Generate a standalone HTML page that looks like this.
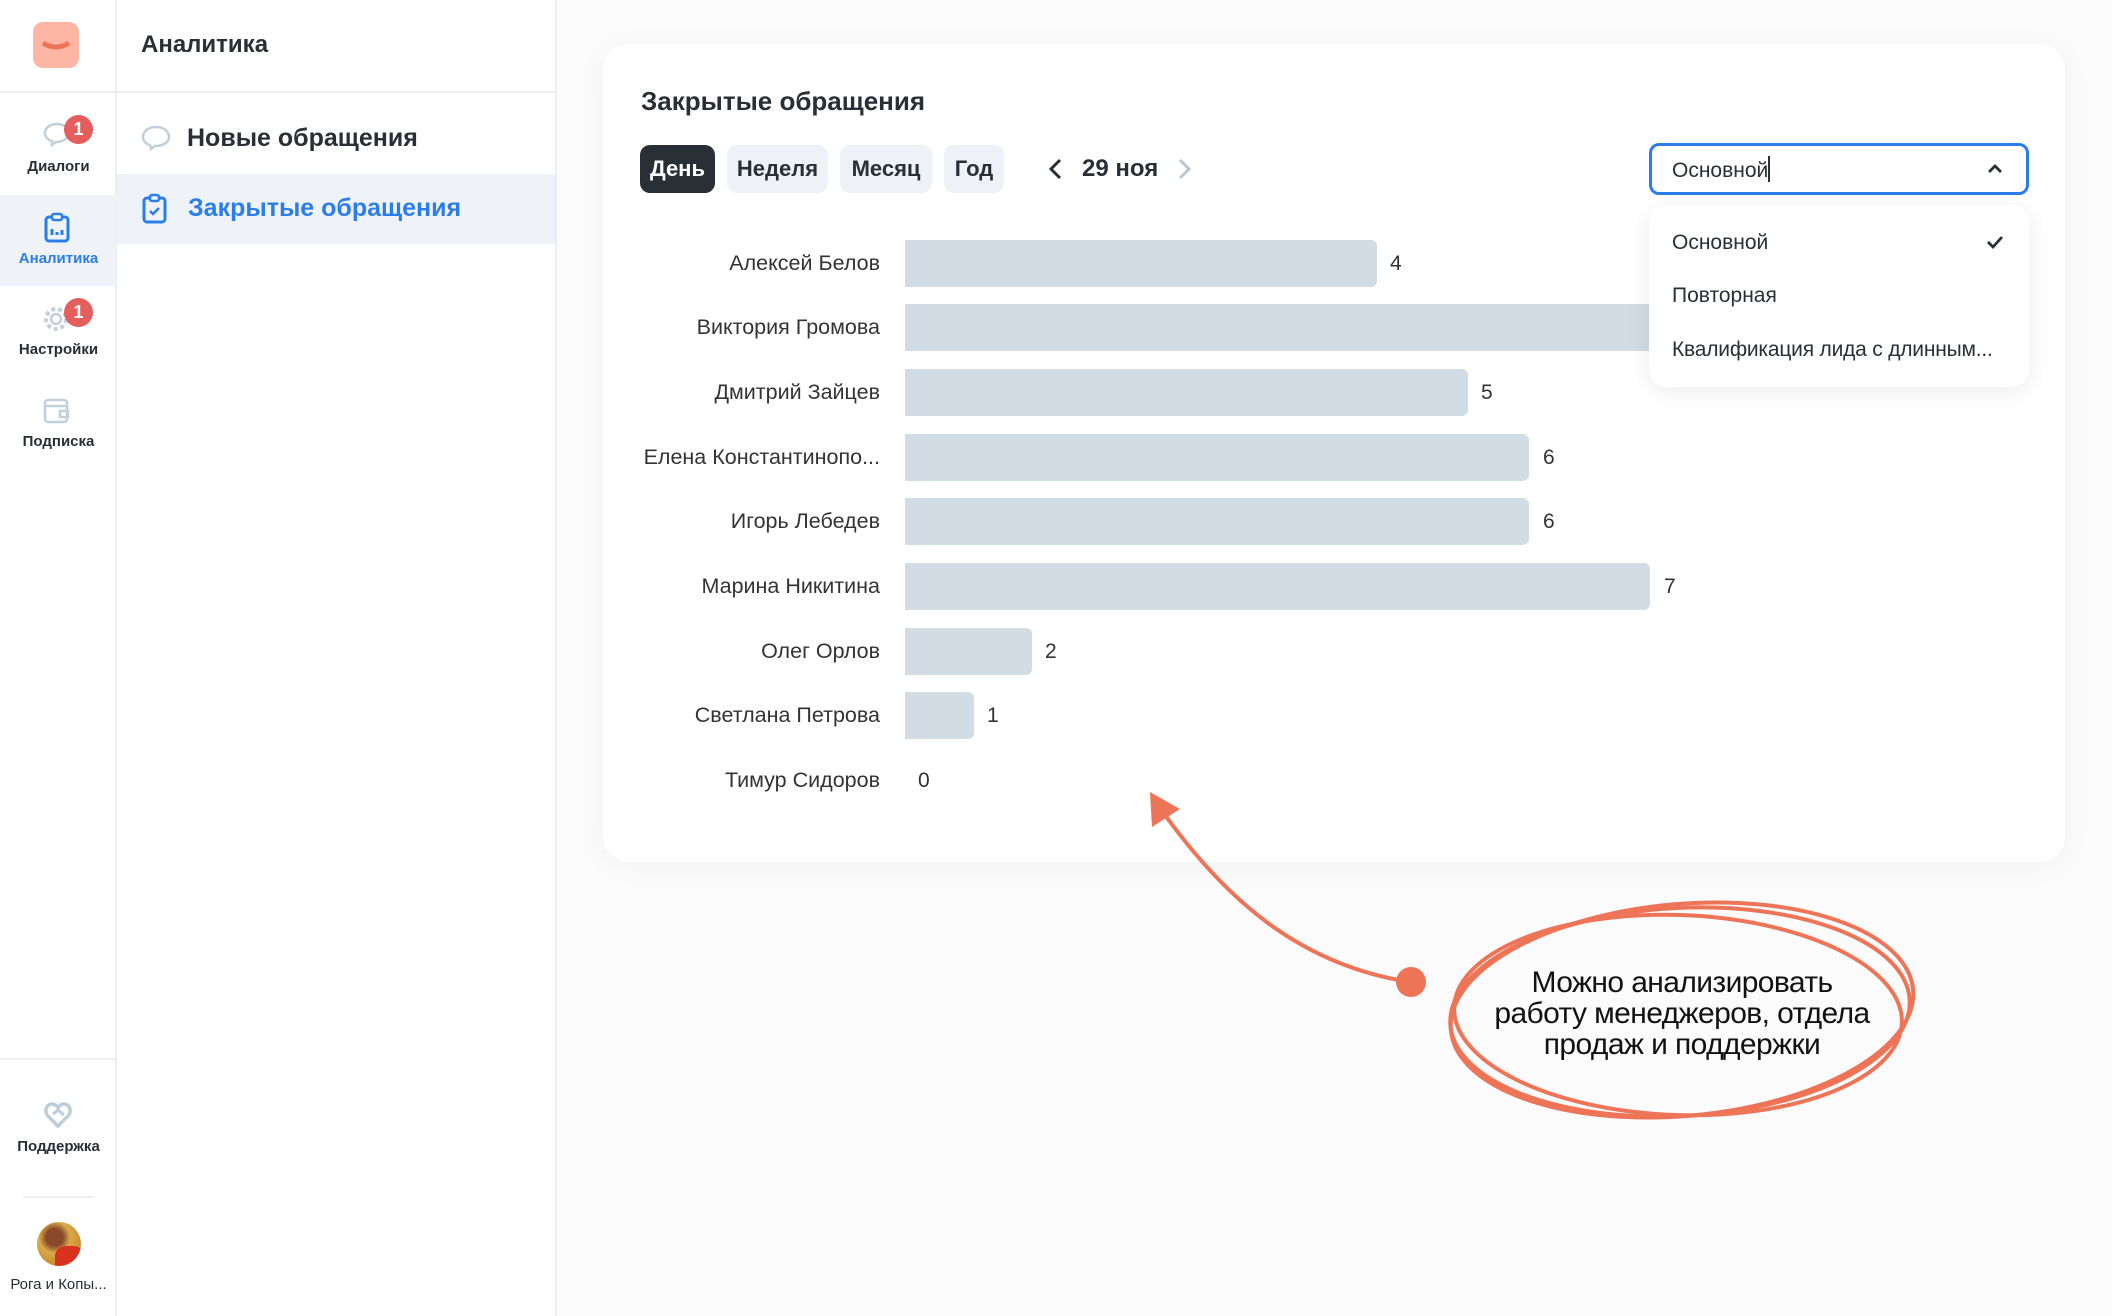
<!DOCTYPE html>
<html><head><meta charset="utf-8"><style>
*{box-sizing:border-box;margin:0;padding:0}
body{width:2112px;height:1316px;position:relative;overflow:hidden;background:#fbfbfc;font-family:"Liberation Sans","Noto Sans CJK SC",sans-serif;color:#2a2f36}
.abs{position:absolute}
.rail{left:0;top:0;width:117px;height:1316px;background:#fff;border-right:2px solid #eceef0}
.panel{left:117px;top:0;width:440px;height:1316px;background:#fff;border-right:2px solid #eceef0}
.ri{position:absolute;left:0;width:117px;text-align:center;font-size:15px;font-weight:bold;color:#2a2f36}
.badge{position:absolute;width:29px;height:29px;border-radius:50%;background:#e45e5e;color:#fff;font-size:18px;line-height:29px;text-align:center;font-weight:bold}
.lbl{position:absolute;right:1232px;width:300px;text-align:right;font-size:21.5px;color:#333;line-height:47px}
.bar{position:absolute;left:905px;height:47px;background:#d1dce5;border-radius:0 6px 6px 0}
.val{position:absolute;font-size:21px;color:#333;line-height:47px}
.btn{position:absolute;top:145px;height:48px;border-radius:10px;background:#eef2f7;font-size:22px;font-weight:bold;line-height:48px;text-align:center;color:#2a2f36}
</style></head><body>
<div class="abs rail"></div>
<div class="abs panel"></div>
<div class="abs" style="left:0;top:91px;width:557px;height:2px;background:#eceef0"></div>
<div class="abs" style="left:33px;top:22px;width:46px;height:46px;border-radius:10px;background:#fdb6a3"></div>
<svg class="abs" style="left:33px;top:22px" width="46" height="46"><path d="M10 21 Q23 29 36 21" stroke="#ee7458" stroke-width="5" fill="none"/></svg>

<svg class="abs" style="left:42px;top:120px" width="30" height="30"><path d="M15 4C8 4 3 8 3 13c0 4 3 7 7 8l0 4 4-3c7 0 13-4 13-9S22 4 15 4z" fill="none" stroke="#c2d0dc" stroke-width="2.5"/></svg>
<div class="badge" style="left:64px;top:115px">1</div>
<div class="ri" style="top:158px">Диалоги</div>
<div class="abs" style="left:0;top:195px;width:116px;height:91px;background:#eff3f8"></div>
<svg class="abs" style="left:43px;top:212px" width="30" height="32"><rect x="3" y="5" width="22" height="24" rx="3" fill="none" stroke="#2b7de9" stroke-width="3"/><rect x="9" y="2" width="10" height="6" rx="2" fill="#fff" stroke="#2b7de9" stroke-width="2.5"/><path d="M9 17v6M14 20v3M19 18v5" stroke="#2b7de9" stroke-width="3"/></svg>
<div class="ri" style="top:250px;color:#2b7de9">Аналитика</div>
<svg class="abs" style="left:42px;top:304px" width="30" height="30"><circle cx="14" cy="15" r="5" fill="none" stroke="#c2d0dc" stroke-width="2.5"/><circle cx="14" cy="15" r="10" fill="none" stroke="#c2d0dc" stroke-width="4" stroke-dasharray="4 3"/></svg>
<div class="badge" style="left:64px;top:298px">1</div>
<div class="ri" style="top:341px">Настройки</div>
<svg class="abs" style="left:42px;top:396px" width="30" height="30"><rect x="3" y="4" width="22" height="22" rx="3" fill="none" stroke="#c2d0dc" stroke-width="2.5"/><path d="M3 10h22M18 15h8v6h-8z" fill="none" stroke="#c2d0dc" stroke-width="2.5"/></svg>
<div class="ri" style="top:433px">Подписка</div>
<div class="abs" style="left:0;top:1058px;width:116px;height:2px;background:#eceef0"></div>
<svg class="abs" style="left:44px;top:1101px" width="28" height="28"><path d="M14 25L4 15C0 11 2 3 8 3c3 0 5 2 6 4c1-2 3-4 6-4c6 0 8 8 4 12z" fill="none" stroke="#bccddb" stroke-width="3.5"/><path d="M9 13l5-4l6 5" stroke="#bccddb" stroke-width="3" fill="none"/></svg>
<div class="ri" style="top:1138px">Поддержка</div>
<div class="abs" style="left:23px;top:1196px;width:71px;height:2px;background:#eceef0"></div>
<div class="abs" style="left:37px;top:1222px;width:44px;height:44px;border-radius:50%;background:radial-gradient(circle at 40% 35%,#8a4a2a 0 22%,#d9a94a 40%,#c98c2e 70%);overflow:hidden"><div style="position:absolute;left:18px;top:24px;width:30px;height:24px;background:#d8321f;border-radius:40% 40% 0 0"></div></div>
<div class="ri" style="top:1276px;font-weight:normal;font-size:15px;color:#2a2f36">Рога и Копы...</div>

<div class="abs" style="left:141px;top:31px;font-size:24px;font-weight:bold">Аналитика</div>
<svg class="abs" style="left:141px;top:124px" width="30" height="30"><path d="M15 3C8 3 2 7 2 13c0 4 3 7 7 8l1 4 4-3c7 0 14-3 14-9S22 3 15 3z" fill="none" stroke="#c2d0dc" stroke-width="2.5"/></svg>
<div class="abs" style="left:187px;top:124px;font-size:25px;font-weight:bold">Новые обращения</div>
<div class="abs" style="left:117px;top:174px;width:438px;height:70px;background:#eff3f8"></div>
<svg class="abs" style="left:142px;top:193px" width="26" height="32"><rect x="2" y="5" width="21" height="24" rx="3" fill="none" stroke="#2b7de9" stroke-width="3"/><rect x="8" y="2" width="9" height="6" rx="2" fill="#eff3f8" stroke="#2b7de9" stroke-width="2.5"/><path d="M8 18l3 3l6-6" stroke="#2b7de9" stroke-width="2.5" fill="none"/></svg>
<div class="abs" style="left:188px;top:194px;font-size:25px;font-weight:bold;color:#2b7de9">Закрытые обращения</div>

<div class="abs" style="left:603px;top:44px;width:1462px;height:818px;background:#fff;border-radius:26px;box-shadow:0 4px 30px rgba(0,0,0,0.04)"></div>
<div class="abs" style="left:641px;top:86px;font-size:26px;font-weight:bold">Закрытые обращения</div>
<div class="btn" style="left:640px;width:75px;background:#2a2f36;color:#fff">День</div>
<div class="btn" style="left:727px;width:101px">Неделя</div>
<div class="btn" style="left:840px;width:92px">Месяц</div>
<div class="btn" style="left:944px;width:60px">Год</div>
<svg class="abs" style="left:1044px;top:157px" width="24" height="24"><path d="M16 3L7 12l9 9" stroke="#2a2f36" stroke-width="3" fill="none"/></svg>
<div class="abs" style="left:1082px;top:155px;font-size:24px;font-weight:bold">29 ноя</div>
<svg class="abs" style="left:1172px;top:157px" width="24" height="24"><path d="M8 3l9 9l-9 9" stroke="#b9c6d3" stroke-width="3" fill="none"/></svg>

<div class="lbl" style="top:240px">Алексей Белов</div><div class="bar" style="top:240px;width:472px"></div><div class="val" style="top:240px;left:1390px">4</div>
<div class="lbl" style="top:304px">Виктория Громова</div><div class="bar" style="top:304px;width:800px"></div>
<div class="lbl" style="top:369px">Дмитрий Зайцев</div><div class="bar" style="top:369px;width:563px"></div><div class="val" style="top:369px;left:1481px">5</div>
<div class="lbl" style="top:434px">Елена Константинопо...</div><div class="bar" style="top:434px;width:624px"></div><div class="val" style="top:434px;left:1543px">6</div>
<div class="lbl" style="top:498px">Игорь Лебедев</div><div class="bar" style="top:498px;width:624px"></div><div class="val" style="top:498px;left:1543px">6</div>
<div class="lbl" style="top:563px">Марина Никитина</div><div class="bar" style="top:563px;width:745px"></div><div class="val" style="top:563px;left:1664px">7</div>
<div class="lbl" style="top:628px">Олег Орлов</div><div class="bar" style="top:628px;width:127px"></div><div class="val" style="top:628px;left:1045px">2</div>
<div class="lbl" style="top:692px">Светлана Петрова</div><div class="bar" style="top:692px;width:69px"></div><div class="val" style="top:692px;left:987px">1</div>
<div class="lbl" style="top:757px">Тимур Сидоров</div><div class="val" style="top:757px;left:918px">0</div>

<div class="abs" style="left:1649px;top:143px;width:380px;height:52px;border:3px solid #2b7de9;border-radius:10px;background:#fff"></div>
<div class="abs" style="left:1672px;top:156px;font-size:21px;color:#2a2f36">Основной<span style="display:inline-block;width:2px;height:26px;background:#2a2f36;vertical-align:-5px"></span></div>
<svg class="abs" style="left:1984px;top:158px" width="22" height="22"><path d="M5 14l6-6l6 6" stroke="#2a2f36" stroke-width="2.8" fill="none"/></svg>
<div class="abs" style="left:1649px;top:205px;width:380px;height:182px;background:#fff;border-radius:18px;box-shadow:0 4px 24px rgba(0,0,0,0.08)"></div>
<div class="abs" style="left:1672px;top:231px;font-size:21px">Основной</div>
<svg class="abs" style="left:1984px;top:231px" width="22" height="22"><path d="M4 11l5 5l9-10" stroke="#2a2f36" stroke-width="2.8" fill="none"/></svg>
<div class="abs" style="left:1672px;top:284px;font-size:21px">Повторная</div>
<div class="abs" style="left:1672px;top:338px;font-size:21px;letter-spacing:-0.2px">Квалификация лида с длинным...</div>

<svg class="abs" style="left:0;top:0" width="2112" height="1316">
<g fill="none" stroke="#ee7458" stroke-width="4">
<path d="M1410 982 C1300 965 1225 900 1160 808"/>
<ellipse cx="1680" cy="1012" rx="230" ry="104" transform="rotate(-3 1680 1012)"/>
<ellipse cx="1678" cy="1015" rx="224" ry="100" transform="rotate(2 1678 1015)"/>
<ellipse cx="1682" cy="1010" rx="232" ry="106" transform="rotate(-5 1682 1010)"/>
</g>
<polygon points="1150,792 1180,809 1152,827" fill="#ee7458"/>
<circle cx="1411" cy="982" r="15" fill="#ee7458"/>
<g font-size="30" text-anchor="middle" font-family="Liberation Sans" fill="#111" letter-spacing="-0.6">
<text x="1682" y="992">Можно анализировать</text>
<text x="1682" y="1023">работу менеджеров, отдела</text>
<text x="1682" y="1054">продаж и поддержки</text>
</g>
</svg>
</body></html>
